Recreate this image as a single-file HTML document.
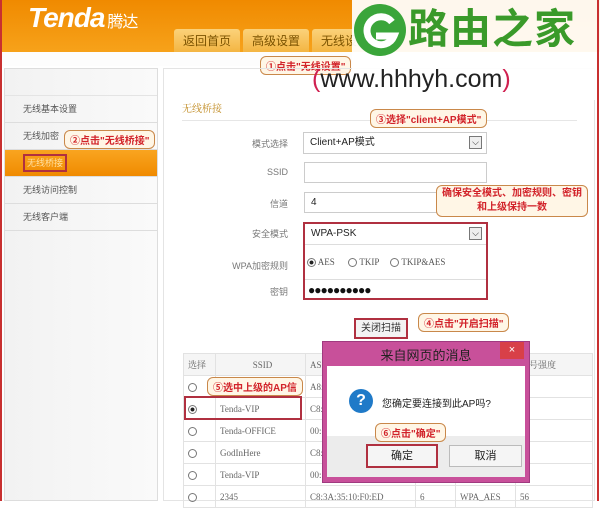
<!DOCTYPE html>
<html><head><meta charset="utf-8"><style>
*{margin:0;padding:0;box-sizing:border-box}
body{width:600px;height:501px;overflow:hidden;background:#fff;font-family:"Liberation Sans","Noto Sans CJK SC",sans-serif;position:relative;font-size:10px;color:#555}
.a{position:absolute}
.hdr{left:0;top:0;width:600px;height:52px;background:linear-gradient(#f08a00,#f7a21a)}
.tab{top:29px;height:24px;background:linear-gradient(#fbd27a,#f3b440);border-radius:3px 3px 0 0;color:#7a5200;font-size:12px;text-align:center;line-height:24px}
.call{border:1.5px solid #c9884a;border-radius:6px;background:#fff6e6;color:#d2232a;font-weight:bold;font-size:10px;padding:1px 5px;white-space:nowrap}
.red{border:2px solid #b03040}
.inp{border:1px solid #ccc;background:#fff;height:21px;font-size:10px;color:#222;line-height:19px;padding-left:6px}
.lbl{font-size:9px;color:#777;text-align:right;width:70px}
.dd{right:4px;top:3px;width:13px;height:13px;border:1px solid #777;background:#eee;font-size:9px;line-height:11px;text-align:center;color:#222}
.side div{height:27px;line-height:27px;padding-left:18px;font-size:9px;color:#555;border-bottom:1px solid #ddd}
td{border:1px solid #e2e2e2;height:22px;font-family:"Liberation Serif","Noto Serif CJK SC",serif;font-size:9px;color:#666;padding-left:4px}
.rd{display:inline-block;width:9px;height:9px;border:1px solid #777;border-radius:50%;vertical-align:middle}
</style></head><body>
<div class="a" style="left:0;top:0;width:2px;height:501px;background:#c83030;z-index:5"></div>
<div class="a" style="right:1px;top:0;width:2px;height:501px;background:#c83030;z-index:5"></div>
<div class="a hdr"></div>
<div class="a" style="left:28px;top:2px;color:#fff;font-size:28px;font-weight:bold;font-style:italic;letter-spacing:-1px">Tenda<span style="font-size:16px;font-style:normal;font-weight:normal;margin-left:3px">腾达</span></div>
<div class="a tab" style="left:174px;width:66px">返回首页</div>
<div class="a tab" style="left:243px;width:66px">高级设置</div>
<div class="a tab" style="left:312px;width:66px">无线设置</div>
<div class="a" style="left:0;top:52px;width:600px;height:14px;background:#fdfdfd"></div>
<div class="a call" style="left:260px;top:56px">①点击"无线设置"</div>
<div class="a side" style="left:4px;top:68px;width:154px;height:433px;border:1px solid #ddd;background:linear-gradient(90deg,#f2f2f2,#fafafa)">
<div style="height:27px;border-bottom:1px solid #e4e4e4"></div>
<div>无线基本设置</div><div>无线加密</div>
<div style="background:linear-gradient(#f9a520,#f08a00);color:#ffe0a0;position:relative"><span style="border:2px solid #b03040;padding:2px 2px">无线桥接</span></div>
<div>无线访问控制</div><div>无线客户端</div>
</div>
<div class="a call" style="left:64px;top:130px">②点击"无线桥接"</div>
<div class="a" style="left:163px;top:68px;width:432px;height:433px;border:1px solid #e4e4e4"></div>
<div class="a" style="left:182px;top:100px;color:#c08a20;font-size:10px;font-family:'Liberation Serif','Noto Serif CJK SC',serif">无线桥接</div>
<div class="a" style="left:182px;top:120px;width:395px;height:1px;background:#e6e6e6"></div>
<div class="a call" style="left:370px;top:109px">③选择"client+AP模式"</div>
<div class="a lbl" style="left:218px;top:137px">模式选择</div>
<div class="a inp red" style="left:303px;top:132px;width:184px;height:22px">Client+AP模式<div class="a dd">⌵</div></div>
<div class="a lbl" style="left:218px;top:167px">SSID</div>
<div class="a inp" style="left:304px;top:162px;width:183px">&nbsp;</div>
<div class="a lbl" style="left:218px;top:197px">信道</div>
<div class="a inp" style="left:304px;top:192px;width:150px">4</div>
<div class="a call" style="left:436px;top:185px;text-align:center;line-height:14px">确保安全模式、加密规则、密钥<br>和上级保持一数</div>
<div class="a red" style="left:303px;top:222px;width:185px;height:78px;background:#fff"></div>
<div class="a lbl" style="left:218px;top:227px">安全模式</div>
<div class="a inp" style="left:305px;top:224px;width:181px;border:0;border-bottom:1px solid #ddd">WPA-PSK<div class="a dd">⌵</div></div>
<div class="a lbl" style="left:218px;top:259px">WPA加密规则</div>
<div class="a" style="left:307px;top:257px;font-size:9px;font-family:'Liberation Serif',serif;color:#555"><span class="rd" style="background:radial-gradient(#222 35%,#fff 45%)"></span> AES &nbsp;&nbsp;&nbsp;&nbsp; <span class="rd"></span> TKIP &nbsp;&nbsp;&nbsp;&nbsp;<span class="rd"></span> TKIP&amp;AES</div>
<div class="a" style="left:305px;top:279px;width:181px;height:1px;background:#ddd"></div>
<div class="a lbl" style="left:218px;top:285px">密钥</div>
<div class="a" style="left:308px;top:283px;font-size:12px;color:#111;font-weight:bold;letter-spacing:-1px">●●●●●●●●●●</div>
<div class="a red" style="left:354px;top:318px;width:54px;height:21px;background:#f3f3f3;font-size:10px;color:#333;text-align:center;line-height:17px">关闭扫描</div>
<div class="a call" style="left:418px;top:313px">④点击"开启扫描"</div>
<table class="a" style="left:183px;top:353px;width:410px;border-collapse:collapse">
<tr style="background:#f5f5f5"><td style="width:32px">选择</td><td style="width:90px;text-align:center">SSID</td><td style="width:110px">AS</td><td style="width:40px"></td><td style="width:60px"></td><td>信号强度</td></tr>
<tr><td><span class="rd"></span></td><td></td><td>A8:</td><td></td><td></td><td>2</td></tr>
<tr><td><span class="rd" style="background:radial-gradient(#222 35%,#fff 45%)"></span></td><td>Tenda-VIP</td><td>C8:</td><td></td><td></td><td>4</td></tr>
<tr><td><span class="rd"></span></td><td>Tenda-OFFICE</td><td>00:</td><td></td><td></td><td>4</td></tr>
<tr><td><span class="rd"></span></td><td>GodInHere</td><td>C8:</td><td></td><td></td><td>9</td></tr>
<tr><td><span class="rd"></span></td><td>Tenda-VIP</td><td>00:</td><td></td><td></td><td>0</td></tr>
<tr><td><span class="rd"></span></td><td>2345</td><td>C8:3A:35:10:F0:ED</td><td>6</td><td>WPA_AES</td><td>56</td></tr>
</table>
<div class="a red" style="left:184px;top:396px;width:118px;height:24px"></div>
<div class="a call" style="left:207px;top:377px">⑤选中上级的AP信</div>
<div class="a" style="left:322px;top:341px;width:208px;height:142px;background:#c8509a;border:1px solid #a03a80"></div>
<div class="a" style="left:322px;top:345px;width:208px;text-align:center;font-size:13px;color:#222">来自网页的消息</div>
<div class="a" style="left:500px;top:342px;width:24px;height:17px;background:#d84048;color:#fff;text-align:center;font-size:11px;line-height:17px">×</div>
<div class="a" style="left:327px;top:366px;width:198px;height:70px;background:#fff"></div>
<div class="a" style="left:327px;top:436px;width:198px;height:41px;background:#ececec"></div>
<div class="a" style="left:349px;top:389px;width:24px;height:24px;border-radius:50%;background:#1f7ac8;color:#fff;font-size:16px;font-weight:bold;text-align:center;line-height:24px">?</div>
<div class="a" style="left:382px;top:395px;font-size:10px;color:#222">您确定要连接到此AP吗?</div>
<div class="a red" style="left:366px;top:444px;width:72px;height:24px;background:#f5f5f5;text-align:center;line-height:20px;font-size:11px;color:#222">确定</div>
<div class="a" style="left:449px;top:445px;width:73px;height:22px;border:1px solid #bbb;background:#f5f5f5;text-align:center;line-height:20px;font-size:11px;color:#222">取消</div>
<div class="a call" style="left:375px;top:423px">⑥点击"确定"</div>
<div class="a" style="left:352px;top:0;width:248px;height:100px;background:rgba(255,255,255,.93)"></div>
<svg class="a" style="left:352px;top:2px" width="56" height="56" viewBox="0 0 56 56"><circle cx="28" cy="28" r="26" fill="#3aa53a"/><path d="M40 20 A14 14 0 1 0 42 34 H24" fill="none" stroke="#fff" stroke-width="7"/></svg>
<div class="a" style="left:408px;top:4px;font-size:41px;color:#3a9a2a;font-weight:bold;letter-spacing:1px;line-height:50px">路由之家</div>
<div class="a" style="left:312px;top:64px;font-size:25px;color:#222;line-height:30px"><span style="color:#d02050">(</span>www.hhhyh.com<span style="color:#d02050">)</span></div>
</body></html>
